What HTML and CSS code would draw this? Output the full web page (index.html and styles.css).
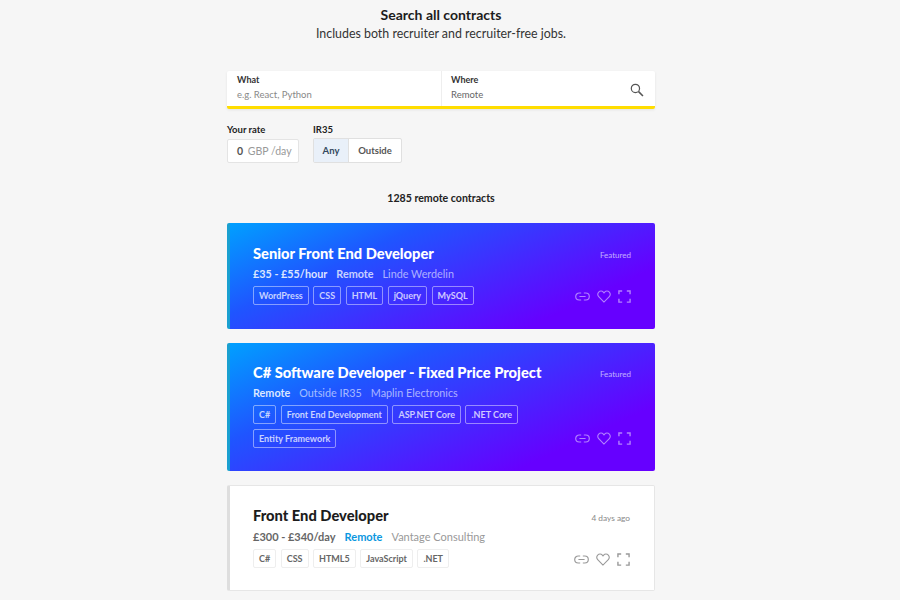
FILE: index.html
```html
<!DOCTYPE html>
<html lang="en">
<head>
    <meta charset="UTF-8">
    <title>Search all contracts</title>
    <link rel="stylesheet" href="styles.css">
</head>
<body>
    <div class="page">
        <header class="intro">
            <h1>Search all contracts</h1>
            <p>Includes both recruiter and recruiter-free jobs.</p>
        </header>

        <div class="search">
            <div class="field field-what">
                <label>What</label>
                <span class="hint">e.g. React, Python</span>
            </div>
            <div class="field field-where">
                <label>Where</label>
                <span class="hint">Remote</span>
                <svg class="search-icon" width="14" height="14" viewBox="0 0 16 16" fill="none" stroke="#555" stroke-width="1.4">
                    <circle cx="6.2" cy="6.2" r="4.7"/>
                    <path d="M9.8 9.8l5 5" stroke-width="1.8"/>
                </svg>
            </div>
        </div>

        <div class="filters">
            <div class="filter">
                <div class="filter-label">Your rate</div>
                <div class="rate"><b>0</b> GBP /day</div>
            </div>
            <div class="filter">
                <div class="filter-label">IR35</div>
                <div class="toggle">
                    <span class="toggle-on">Any</span>
                    <span class="toggle-off">Outside</span>
                </div>
            </div>
        </div>

        <div class="count">1285 remote contracts</div>

        <div class="card featured">
            <div class="card-main">
                <h2>Senior Front End Developer</h2>
                <div class="meta">
                    <span class="strong">£35 - £55/hour</span>
                    <span class="mid">Remote</span>
                    <span class="dim">Linde Werdelin</span>
                </div>
                <div class="tags">
                    <span class="tag">WordPress</span>
                    <span class="tag">CSS</span>
                    <span class="tag">HTML</span>
                    <span class="tag">jQuery</span>
                    <span class="tag">MySQL</span>
                </div>
            </div>
            <div class="card-side">
                <span class="when">Featured</span>
                <div class="actions">
                    <svg width="15" height="9" viewBox="0 0 17 10" fill="none" stroke="currentColor" stroke-width="1.3"><path d="M7 1H4.800a4 4 0 0 0 0 8H7M10 1h2.200a4 4 0 0 1 0 8H10M5 5h7"/></svg>
                    <svg width="14" height="13" viewBox="0 0 15 14" fill="none" stroke="currentColor" stroke-width="1.2"><path d="M7.500 13L1.800 7.200a3.500 3.500 0 0 1 0-5 3.500 3.500 0 0 1 5 0l.7.8.7-.8a3.500 3.500 0 0 1 5 0 3.500 3.500 0 0 1 0 5z"/></svg>
                    <svg width="13" height="13" viewBox="0 0 14 14" fill="none" stroke="currentColor" stroke-width="1.5"><path d="M1 4.500V1h3.500M9.500 1H13v3.500M13 9.500V13H9.500M4.500 13H1V9.500"/></svg>
                </div>
            </div>
        </div>

        <div class="card featured wrapped">
            <div class="card-main">
                <h2>C# Software Developer - Fixed Price Project</h2>
                <div class="meta">
                    <span class="strong">Remote</span>
                    <span class="mid-light">Outside IR35</span>
                    <span class="dim">Maplin Electronics</span>
                </div>
                <div class="tags">
                    <span class="tag">C#</span>
                    <span class="tag">Front End Development</span>
                    <span class="tag">ASP.NET Core</span>
                    <span class="tag">.NET Core</span>
                    <span class="tag">Entity Framework</span>
                </div>
            </div>
            <div class="card-side">
                <span class="when">Featured</span>
                <div class="actions">
                    <svg width="15" height="9" viewBox="0 0 17 10" fill="none" stroke="currentColor" stroke-width="1.3"><path d="M7 1H4.800a4 4 0 0 0 0 8H7M10 1h2.200a4 4 0 0 1 0 8H10M5 5h7"/></svg>
                    <svg width="14" height="13" viewBox="0 0 15 14" fill="none" stroke="currentColor" stroke-width="1.2"><path d="M7.500 13L1.800 7.200a3.500 3.500 0 0 1 0-5 3.500 3.500 0 0 1 5 0l.7.8.7-.8a3.500 3.500 0 0 1 5 0 3.500 3.500 0 0 1 0 5z"/></svg>
                    <svg width="13" height="13" viewBox="0 0 14 14" fill="none" stroke="currentColor" stroke-width="1.5"><path d="M1 4.500V1h3.500M9.500 1H13v3.500M13 9.500V13H9.500M4.500 13H1V9.500"/></svg>
                </div>
            </div>
        </div>

        <div class="card plain">
            <div class="card-main">
                <h2>Front End Developer</h2>
                <div class="meta">
                    <span class="strong">£300 - £340/day</span>
                    <span class="remote">Remote</span>
                    <span class="dim">Vantage Consulting</span>
                </div>
                <div class="tags">
                    <span class="tag">C#</span>
                    <span class="tag">CSS</span>
                    <span class="tag">HTML5</span>
                    <span class="tag">JavaScript</span>
                    <span class="tag">.NET</span>
                </div>
            </div>
            <div class="card-side">
                <span class="when">4 days ago</span>
                <div class="actions">
                    <svg width="15" height="9" viewBox="0 0 17 10" fill="none" stroke="currentColor" stroke-width="1.3"><path d="M7 1H4.800a4 4 0 0 0 0 8H7M10 1h2.200a4 4 0 0 1 0 8H10M5 5h7"/></svg>
                    <svg width="14" height="13" viewBox="0 0 15 14" fill="none" stroke="currentColor" stroke-width="1.2"><path d="M7.500 13L1.800 7.200a3.500 3.500 0 0 1 0-5 3.500 3.500 0 0 1 5 0l.7.8.7-.8a3.500 3.500 0 0 1 5 0 3.500 3.500 0 0 1 0 5z"/></svg>
                    <svg width="13" height="13" viewBox="0 0 14 14" fill="none" stroke="currentColor" stroke-width="1.5"><path d="M1 4.500V1h3.500M9.500 1H13v3.500M13 9.500V13H9.500M4.500 13H1V9.500"/></svg>
                </div>
            </div>
        </div>
    </div>
</body>
</html>
```

FILE: styles.css
```css
body {
    margin: 0;
    background-color: #f6f6f6;
    font-family: "Lato", "Noto Sans", sans-serif;
    color: #1c1c1c;
    height: 600px;
    overflow: hidden;
}

.page {
    width: 428px;
    margin-left: 227px;
}

.intro {
    text-align: center;
    padding-top: 6px;
    margin-bottom: 29px;
}

h1 {
    font-size: 14px;
    line-height: 17px;
    font-weight: 700;
    margin: 0;
}

.intro p {
    font-size: 12.4px;
    line-height: 17px;
    color: #333;
    margin: 2px 0 0;
}

.search {
    display: flex;
    height: 35px;
    background-color: white;
    border-bottom: 3px solid #ffdd00;
    border-radius: 2px;
    box-shadow: 0 1px 3px rgba(0, 0, 0, 0.08);
}

.field {
    position: relative;
    padding: 3px 10px 0;
    box-sizing: border-box;
}

.field-what {
    width: 215px;
    border-right: 1px solid #eee;
}

.field-where {
    flex: 1;
    padding-left: 9px;
}

.field label {
    display: block;
    font-size: 9px;
    line-height: 12px;
    font-weight: 700;
    color: #333;
}

.hint {
    display: block;
    font-size: 9.5px;
    line-height: 14px;
    margin-top: 2px;
    color: #888;
}

.field-where .hint {
    color: #666;
}

.search-icon {
    position: absolute;
    right: 11px;
    top: 12px;
}

.filters {
    display: flex;
    gap: 14px;
    margin-top: 14px;
}

.filter-label {
    font-size: 9.5px;
    font-weight: 700;
    line-height: 13px;
    color: #222;
    margin-bottom: 3px;
}

.rate {
    width: 72px;
    height: 24px;
    box-sizing: border-box;
    background-color: white;
    border: 1px solid #e4e4e4;
    border-radius: 2px;
    font-size: 10.5px;
    line-height: 22px;
    padding-left: 9px;
    color: #999;
}

.rate b {
    color: #555;
    margin-right: 2px;
}

.toggle {
    display: flex;
    height: 25px;
    margin-top: -1px;
    box-sizing: border-box;
    border: 1px solid #e0e0e0;
    border-radius: 2px;
    background-color: white;
    font-size: 9.5px;
    font-weight: 700;
    line-height: 23px;
}

.toggle-on {
    width: 34px;
    text-align: center;
    background-color: #e9f0f9;
    color: #34495e;
    border-right: 1px solid #e0e0e0;
}

.toggle-off {
    width: 52px;
    text-align: center;
    color: #555;
}

.count {
    text-align: center;
    font-size: 10.6px;
    font-weight: 700;
    line-height: 14px;
    margin: 28px 0 18px;
    color: #222;
}

.card {
    display: flex;
    justify-content: space-between;
    box-sizing: border-box;
    margin-bottom: 14px;
    padding: 21px 24px 9px 23px;
    border-radius: 2px;
}

.featured {
    height: 106px;
    background: linear-gradient(155deg, #00a0ff 0%, #1f55ff 30%, #6600ff 80%);
    border-left: 3px solid #1aa0d0;
    color: white;
}

.wrapped {
    height: 128px;
    padding-top: 20px;
}

.plain {
    height: 106px;
    padding-top: 20px;
    background-color: white;
    border: 1px solid #e6e6e6;
    border-left: 3px solid #dedede;
}

h2 {
    font-size: 14.7px;
    line-height: 18px;
    font-weight: 900;
    margin: 0;
}

.meta {
    display: flex;
    gap: 9px;
    font-size: 10.8px;
    line-height: 14px;
    margin-top: 5px;
}

.plain .meta {
    font-size: 11px;
    margin-top: 6px;
}

.strong {
    font-weight: 700;
}

.featured .strong {
    color: rgba(255, 255, 255, 0.85);
}

.mid {
    font-weight: 700;
    color: rgba(255, 255, 255, 0.75);
}

.mid-light, .featured .dim {
    color: rgba(255, 255, 255, 0.6);
}

.plain .strong {
    color: #666;
}

.remote {
    font-weight: 700;
    color: #0a97e0;
}

.plain .dim {
    color: #999;
}

.tags {
    display: flex;
    flex-wrap: wrap;
    gap: 5px 4.5px;
    margin-top: 5px;
}

.tag {
    height: 19px;
    box-sizing: border-box;
    padding: 0 5px;
    font-size: 9px;
    line-height: 17px;
    font-weight: 700;
    border-radius: 2px;
}

.featured .tag {
    border: 1px solid rgba(255, 255, 255, 0.45);
    color: rgba(255, 255, 255, 0.75);
}

.plain .tag {
    border: 1px solid #eee;
    color: #666;
}

.card-side {
    display: flex;
    flex-direction: column;
    align-items: flex-end;
    justify-content: space-between;
    flex-shrink: 0;
    padding-bottom: 17px;
}

.plain .card-side {
    padding-bottom: 15px;
}

.when {
    font-size: 8px;
    line-height: 20px;
    margin-top: 1px;
    color: rgba(255, 255, 255, 0.65);
}

.plain .when {
    font-size: 8.3px;
    margin-top: 2px;
    color: #888;
}

.actions {
    display: flex;
    align-items: center;
    gap: 7px;
    color: rgba(255, 255, 255, 0.5);
}

.plain .actions {
    color: #999;
}
```
